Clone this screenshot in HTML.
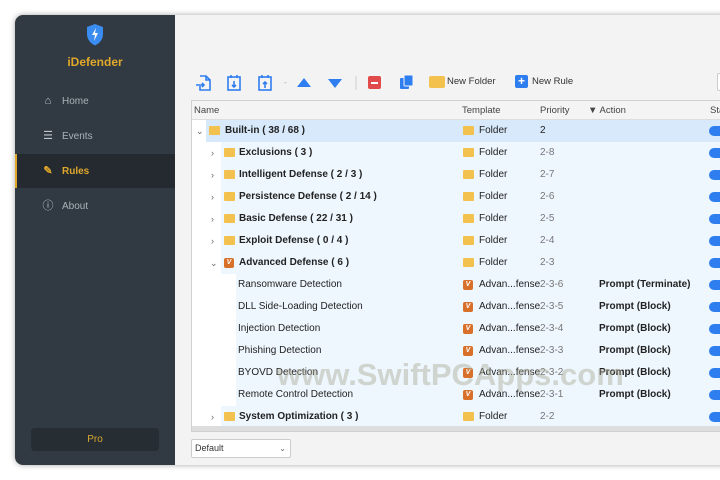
<!DOCTYPE html>
<html><head><style>
*{margin:0;padding:0;box-sizing:border-box}
body{width:720px;height:480px;background:#fff;font-family:"Liberation Sans",sans-serif;position:relative;overflow:hidden;font-size:10px;color:#222}
.win{position:absolute;left:15px;top:15px;width:720px;height:450px;background:#f3f3f3;border-radius:8px;overflow:hidden;box-shadow:0 0 6px rgba(0,0,0,.35)}
.side{position:absolute;left:0;top:0;width:160px;height:450px;background:#313a42}
.logo{position:absolute;left:70px;top:8px}
.brand{position:absolute;left:0;width:160px;top:40px;text-align:center;color:#e0a82a;font-weight:bold;font-size:12px}
.nav{position:absolute;left:0;width:160px;height:34px;color:#aab2b8;font-size:10px;line-height:34px;padding-left:27px}
.nav i{display:inline-block;width:12px;margin-right:8px;font-style:normal;text-align:center;font-size:11px;color:#c0c6cb}
.nav.act{background:#242a30;color:#e0a82a;font-weight:bold;border-left:2px solid #e0a82a;padding-left:25px}
.nav.act i{color:#e0a82a}
.pro{position:absolute;left:16px;top:413px;width:128px;height:23px;background:#262d33;border-radius:4px;color:#d8a830;text-align:center;line-height:23px;font-size:10px}
.tb{position:absolute;top:58px;height:20px}
.table{position:absolute;left:176px;top:85px;width:560px;height:332px;background:#fff;border:1px solid #d0d0d0}
.hdr{position:absolute;left:0;top:0;width:100%;height:19px;background:#f4f4f4;border-bottom:1px solid #ddd;color:#444;font-size:9.5px;line-height:19px}
.hdr span{position:absolute}
.row{position:absolute;left:0;width:100%;height:22px;line-height:22px;font-size:10px}
.row .bg{position:absolute;top:0;bottom:0;right:0;background:#eef6fe}
.row.sel .bg{background:#d7e9fb}
.row span{position:absolute}
.b{font-weight:bold;color:#222}
.fold{display:inline-block;width:11px;height:9px;background:#f2c14e;border-radius:1px;position:absolute;top:6px}
.v{display:inline-block;width:10px;height:10px;background:#d8702a;border-radius:2px;color:#fff;font-size:7px;font-weight:bold;line-height:10px;text-align:center;position:absolute;top:6px}
.tog{position:absolute;left:517px;top:6px;width:20px;height:10px;background:#2f7ef0;border-radius:5px}
.g{color:#777}
.arr{color:#666;font-size:9px}
.scroll{position:absolute;left:0;bottom:0;width:100%;height:5px;background:#ddd}
.sel2{position:absolute;left:176px;top:424px;width:100px;height:19px;background:#fff;border:1px solid #ccc;border-radius:2px;font-size:9px;line-height:17px;padding-left:3px;color:#333}
.wm{position:absolute;left:277px;top:357px;font-size:31px;font-weight:bold;color:rgba(170,170,150,.45)}
</style></head><body>
<div class="win">
 <div class="side">
  <svg class="logo" width="20" height="24" viewBox="0 0 20 24"><path d="M10 1L18 4V11C18 17 14 20.5 10 22.5C6 20.5 2 17 2 11V4Z" fill="#3b8cf0"/><path d="M11 5L7 12H10L9 18L13 10H10Z" fill="#fff"/></svg>
  <div class="brand">iDefender</div>
  <div class="nav" style="top:69px"><i>⌂</i>Home</div>
  <div class="nav" style="top:104px"><i>☰</i>Events</div>
  <div class="nav act" style="top:139px"><i>✎</i>Rules</div>
  <div class="nav" style="top:174px"><i>ⓘ</i>About</div>
  <div class="pro">Pro</div>
 </div>
 <svg class="tb" style="left:180px" width="230" height="20" viewBox="0 0 230 20">
  <g fill="none" stroke="#2f7ef0" stroke-width="1.6">
   <path d="M5 3H11L15 7V17H5V13M11 3V7H15M1 12H9M7 10L9 12L7 14"/>
   <rect x="33" y="4" width="12" height="13"/><path d="M36 2V5M42 2V5M39 8V14M37 12L39 14L41 12"/>
   <rect x="64" y="4" width="12" height="13"/><path d="M67 2V5M73 2V5M70 15V9M68 11L70 9L72 11"/>
  </g>
  <text x="89" y="12" fill="#999" font-size="8">-</text>
  <path d="M102 14L109 5L116 14Z" fill="#2f7ef0"/><path d="M133 6L140 15L147 6Z" fill="#2f7ef0"/>
  <line x1="161" y1="3" x2="161" y2="17" stroke="#ccc"/>
  <rect x="173" y="3" width="13" height="13" rx="2" fill="#e04a4a"/><rect x="176" y="9" width="7" height="2" fill="#fff"/>
  <rect x="205" y="5" width="9" height="11" rx="1" fill="#2f7ef0"/><rect x="209" y="2" width="9" height="11" rx="1" fill="#2f7ef0" stroke="#f3f3f3"/>
 </svg>
 <div class="tb" style="left:414px;width:80px"><span style="position:absolute;left:0;top:3px;width:16px;height:12px;background:#f2c14e;border-radius:2px"></span><span style="position:absolute;left:18px;top:3px;font-size:9.5px;color:#333">New Folder</span></div>
 <div class="tb" style="left:500px;width:80px"><span style="position:absolute;left:0;top:2px;width:13px;height:13px;background:#2f7ef0;border-radius:2px;color:#fff;font-size:12px;line-height:13px;text-align:center;font-weight:bold">+</span><span style="position:absolute;left:17px;top:3px;font-size:9.5px;color:#333">New Rule</span></div>
 <div style="position:absolute;left:702px;top:58px;width:20px;height:18px;border:1px solid #ccc;background:#fff;border-radius:2px"></div>
 <div class="table">
  <div class="hdr"><span style="left:2px">Name</span><span style="left:270px">Template</span><span style="left:348px">Priority</span><span style="left:396px">▼ Action</span><span style="left:518px">Sta</span></div>
  <div class="row sel" style="top:19px"><div class="bg" style="left:14px"></div><span class="arr" style="left:4px">⌄</span><i class="fold" style="left:17px"></i><span class="b" style="left:33px">Built-in ( 38 / 68 )</span><i class="fold" style="left:271px"></i><span style="left:287px">Folder</span><span style="left:348px">2</span><i class="tog"></i></div>
  <div class="row" style="top:41px"><div class="bg" style="left:29px"></div><span class="arr" style="left:19px">›</span><i class="fold" style="left:32px"></i><span class="b" style="left:47px">Exclusions ( 3 )</span><i class="fold" style="left:271px"></i><span style="left:287px">Folder</span><span class="g" style="left:348px">2-8</span><i class="tog"></i></div>
  <div class="row" style="top:63px"><div class="bg" style="left:29px"></div><span class="arr" style="left:19px">›</span><i class="fold" style="left:32px"></i><span class="b" style="left:47px">Intelligent Defense ( 2 / 3 )</span><i class="fold" style="left:271px"></i><span style="left:287px">Folder</span><span class="g" style="left:348px">2-7</span><i class="tog"></i></div>
  <div class="row" style="top:85px"><div class="bg" style="left:29px"></div><span class="arr" style="left:19px">›</span><i class="fold" style="left:32px"></i><span class="b" style="left:47px">Persistence Defense ( 2 / 14 )</span><i class="fold" style="left:271px"></i><span style="left:287px">Folder</span><span class="g" style="left:348px">2-6</span><i class="tog"></i></div>
  <div class="row" style="top:107px"><div class="bg" style="left:29px"></div><span class="arr" style="left:19px">›</span><i class="fold" style="left:32px"></i><span class="b" style="left:47px">Basic Defense ( 22 / 31 )</span><i class="fold" style="left:271px"></i><span style="left:287px">Folder</span><span class="g" style="left:348px">2-5</span><i class="tog"></i></div>
  <div class="row" style="top:129px"><div class="bg" style="left:29px"></div><span class="arr" style="left:19px">›</span><i class="fold" style="left:32px"></i><span class="b" style="left:47px">Exploit Defense ( 0 / 4 )</span><i class="fold" style="left:271px"></i><span style="left:287px">Folder</span><span class="g" style="left:348px">2-4</span><i class="tog"></i></div>
  <div class="row" style="top:151px"><div class="bg" style="left:29px"></div><span class="arr" style="left:18px">⌄</span><i class="v" style="left:32px">V</i><span class="b" style="left:47px">Advanced Defense ( 6 )</span><i class="fold" style="left:271px"></i><span style="left:287px">Folder</span><span class="g" style="left:348px">2-3</span><i class="tog"></i></div>
  <div class="row" style="top:173px"><div class="bg" style="left:44px"></div><span style="left:46px">Ransomware Detection</span><i class="v" style="left:271px">V</i><span style="left:287px">Advan...fense</span><span class="g" style="left:348px">2-3-6</span><span class="b" style="left:407px">Prompt (Terminate)</span><i class="tog"></i></div>
  <div class="row" style="top:195px"><div class="bg" style="left:44px"></div><span style="left:46px">DLL Side-Loading Detection</span><i class="v" style="left:271px">V</i><span style="left:287px">Advan...fense</span><span class="g" style="left:348px">2-3-5</span><span class="b" style="left:407px">Prompt (Block)</span><i class="tog"></i></div>
  <div class="row" style="top:217px"><div class="bg" style="left:44px"></div><span style="left:46px">Injection Detection</span><i class="v" style="left:271px">V</i><span style="left:287px">Advan...fense</span><span class="g" style="left:348px">2-3-4</span><span class="b" style="left:407px">Prompt (Block)</span><i class="tog"></i></div>
  <div class="row" style="top:239px"><div class="bg" style="left:44px"></div><span style="left:46px">Phishing Detection</span><i class="v" style="left:271px">V</i><span style="left:287px">Advan...fense</span><span class="g" style="left:348px">2-3-3</span><span class="b" style="left:407px">Prompt (Block)</span><i class="tog"></i></div>
  <div class="row" style="top:261px"><div class="bg" style="left:44px"></div><span style="left:46px">BYOVD Detection</span><i class="v" style="left:271px">V</i><span style="left:287px">Advan...fense</span><span class="g" style="left:348px">2-3-2</span><span class="b" style="left:407px">Prompt (Block)</span><i class="tog"></i></div>
  <div class="row" style="top:283px"><div class="bg" style="left:44px"></div><span style="left:46px">Remote Control Detection</span><i class="v" style="left:271px">V</i><span style="left:287px">Advan...fense</span><span class="g" style="left:348px">2-3-1</span><span class="b" style="left:407px">Prompt (Block)</span><i class="tog"></i></div>
  <div class="row" style="top:305px"><div class="bg" style="left:29px"></div><span class="arr" style="left:19px">›</span><i class="fold" style="left:32px"></i><span class="b" style="left:47px">System Optimization ( 3 )</span><i class="fold" style="left:271px"></i><span style="left:287px">Folder</span><span class="g" style="left:348px">2-2</span><i class="tog"></i></div>
  <div class="scroll"></div>
 </div>
 <div class="sel2">Default<span style="position:absolute;right:4px;top:0;font-size:8px;color:#666">⌄</span></div>
</div>
<div class="wm">www.SwiftPCApps.com</div>
</body></html>
